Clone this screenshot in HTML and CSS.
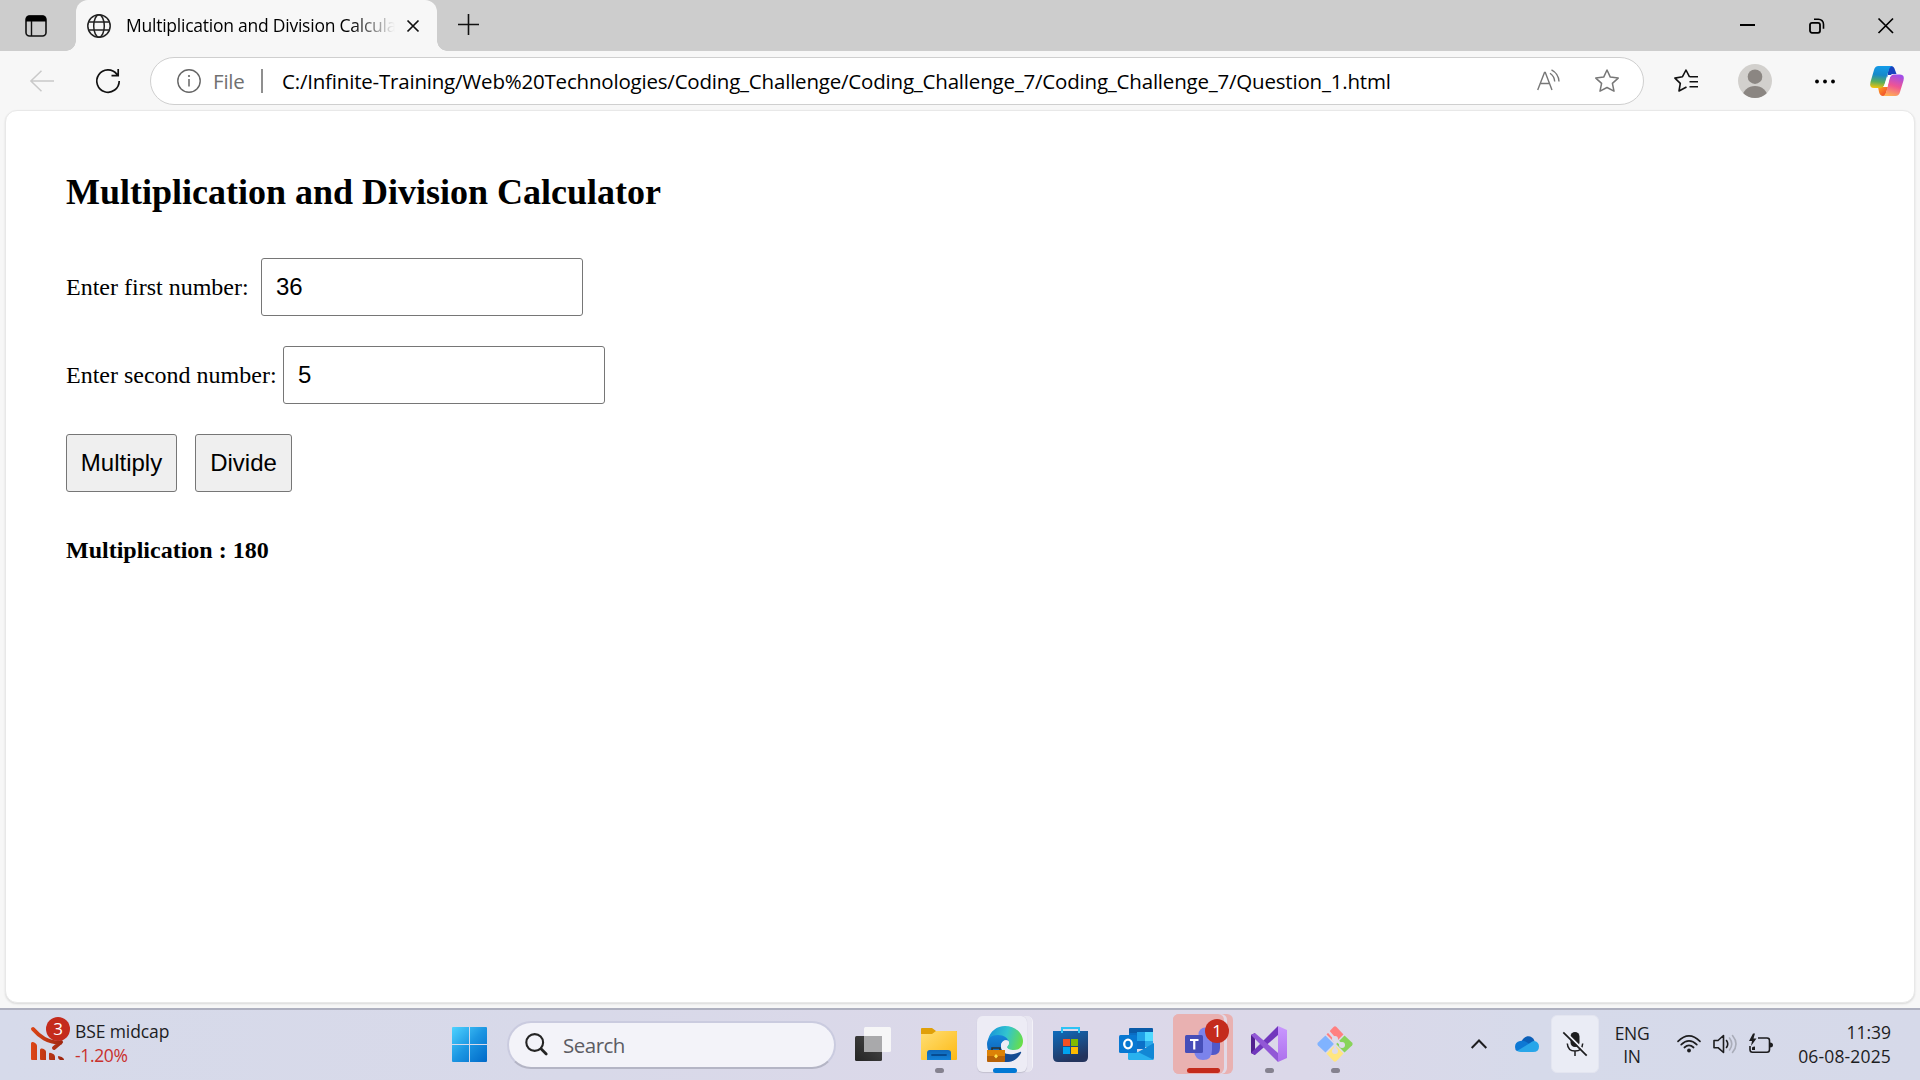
FILE: index.html
```html
<!DOCTYPE html>
<html lang="en">
<head>
<meta charset="utf-8">
<title>Multiplication and Division Calculator</title>
<link rel="stylesheet" href="styles.css">
</head>
<body>
<div class="screen">
  <header class="tabbar">
    <svg class="tab-actions" width="22" height="22" viewBox="0 0 22 22"><rect x="1" y="1" width="20" height="20" rx="3.5" fill="none" stroke="#111" stroke-width="1.6"/><path d="M1 6.5V4a3.5 3.500 0 0 1 3.500-3.500h13A3.500 3.500 0 0 1 21 4v2.500z" fill="#000"/><path d="M6.500 6v15" stroke="#111" stroke-width="1.400"/></svg>
    <div class="tab">
      <svg width="24" height="24" viewBox="0 0 24 24" fill="none" stroke="#222" stroke-width="1.500"><circle cx="12" cy="12" r="11.200"/><ellipse cx="12" cy="12" rx="5.300" ry="11.200"/><path d="M2 8h20M2 16h20"/></svg>
      <span class="tab-title">Multiplication and Division Calcula</span>
      <svg width="12" height="12" viewBox="0 0 12 12" stroke="#111" stroke-width="1.700"><path d="M.5.5l11 11M11.500.5l-11 11"/></svg>
    </div>
    <svg class="new-tab" width="22" height="22" viewBox="0 0 22 22" stroke="#111" stroke-width="1.600"><path d="M0 10.500h21M10.500 0v21"/></svg>
    <div class="window-controls">
      <svg width="16" height="16" viewBox="0 0 16 16"><path d="M0 7h15" stroke="#000" stroke-width="2"/></svg>
      <svg width="16" height="16" viewBox="0 0 16 16" fill="none" stroke="#000" stroke-width="1.800"><rect x="1" y="4.800" width="10" height="10" rx="2"/><path d="M5 1.200h4.500a5 5 0 0 1 5 5v4.500" stroke-width="1.600"/></svg>
      <svg width="16" height="16" viewBox="0 0 16 16" stroke="#000" stroke-width="1.700"><path d="M.5.5l14.500 14.500M15 .5L.5 15"/></svg>
    </div>
  </header>

  <nav class="toolbar">
    <svg class="back" width="24" height="22" viewBox="0 0 24 22" fill="none" stroke="#c9c9c9" stroke-width="1.500"><path d="M24 11H1M11.500.7L.9 11l10.600 10.300"/></svg>
    <svg class="reload" width="24" height="24" viewBox="0 0 24 24" fill="none" stroke="#111" stroke-width="1.700"><path d="M23.200 12A11.200 11.200 0 1 1 20.800 5.100L22 6.500M22.200 0v6.700h-6.700"/></svg>
    <div class="address">
      <svg width="24" height="24" viewBox="0 0 24 24"><circle cx="12" cy="12" r="11.200" fill="none" stroke="#666" stroke-width="1.400"/><path d="M12 10v7.500" stroke="#666" stroke-width="1.500"/><circle cx="12" cy="7" r="1.100" fill="#666"/></svg>
      <span class="scheme">File</span>
      <span class="divider"></span>
      <span class="url">C:/Infinite-Training/Web%20Technologies/Coding_Challenge/Coding_Challenge_7/Coding_Challenge_7/Question_1.html</span>
      <svg class="read" width="24" height="24" viewBox="0 0 24 24" fill="none" stroke="#777" stroke-width="1.400"><path d="M.7 21L7.500 3.500h.8L15 21M3.200 14.500h9.300M13 4.200a11 11 0 0 1 4.700 8.300M14.500.8a14 14 0 0 1 7.500 11.700"/></svg>
      <svg class="star" width="24" height="24" viewBox="0 0 24 24" fill="none" stroke="#777" stroke-width="1.500" stroke-linejoin="round"><path d="M12 1l3.300 7.100 7.900 1-5.800 5.300 1.600 7.800L12 18.500l-7 3.700 1.600-7.800L.8 9.100l7.900-1z"/></svg>
    </div>
    <svg class="favorites" width="26" height="24" viewBox="0 0 26 24" fill="none" stroke="#111" stroke-width="1.600" stroke-linejoin="round"><path d="M15.500 7.800L12 1 8.500 7.700.9 9.100l5.400 5.300L5 22l7.500-4M15.500 7.800H24M15.500 12.800H24M15.500 17.800H24"/></svg>
    <svg class="avatar" width="34" height="34" viewBox="0 0 34 34"><defs><clipPath id="face"><circle cx="17" cy="17" r="17"/></clipPath></defs><g clip-path="url(#face)"><path d="M0 0h34v34H0z" fill="#d2d0cd"/><g fill="#8b8682"><circle cx="17" cy="12.700" r="7.300"/><ellipse cx="17" cy="33" rx="12.500" ry="11"/></g></g></svg>
    <svg class="more" width="20" height="6" viewBox="0 0 20 6"><circle cx="2" cy="3.500" r="1.900"/><circle cx="10" cy="3.500" r="1.900"/><circle cx="18" cy="3.500" r="1.900"/></svg>
    <svg class="copilot" width="34" height="32" viewBox="0 0 34 32">
      <defs>
        <linearGradient id="cpL" x1=".4" y1="0" x2=".3" y2="1"><stop offset="0" stop-color="#139be8"/><stop offset=".4" stop-color="#1789c9"/><stop offset=".72" stop-color="#5cae5b"/><stop offset="1" stop-color="#f4c20b"/></linearGradient>
        <linearGradient id="cpR" x1=".6" y1="0" x2=".3" y2="1"><stop offset="0" stop-color="#a14de8"/><stop offset=".5" stop-color="#ef5494"/><stop offset="1" stop-color="#ffb053"/></linearGradient>
        <linearGradient id="cpB" x1="0" y1="0" x2="1" y2="1"><stop offset="0" stop-color="#ffa51f"/><stop offset="1" stop-color="#ee3b34"/></linearGradient>
      </defs>
      <path d="M19 1h2q3 0 4 4l1.500 4H22l-5 4z" fill="#1643bf"/>
      <path d="M8 22h10l-3 9h-2q-3 0-4-4z" fill="url(#cpB)"/>
      <path d="M8.500 1H22q-2.500 1-3.500 5L14.600 19q-1.200 4-4.600 4H4q-5 0-3.500-6L4 5q1-4 4.500-4z" fill="url(#cpL)"/>
      <path d="M25.500 31H13q2.500-1 3.500-5l3-12q1-4.500 4.500-4.500h6q5 0 3.500 6L30 27q-1 4-4.500 4z" fill="url(#cpR)"/>
      <path d="M18 10h3.500q-1.500 1-2.200 4l-2 8h-4q1-1 1.700-3.500z" fill="#fff"/>
    </svg>
  </nav>

  <main class="page">
    <h2>Multiplication and Division Calculator</h2>
    <div class="field"><label class="first" for="n1">Enter first number:</label><input id="n1" type="text" value="36"></div>
    <div class="field"><label class="second" for="n2">Enter second number:</label><input id="n2" type="text" value="5"></div>
    <div class="actions"><button class="multiply">Multiply</button><button class="divide">Divide</button></div>
    <p class="result">Multiplication : 180</p>
  </main>

  <footer class="taskbar">
    <div class="widget">
      <div class="widget-icon">
        <svg width="34" height="36" viewBox="0 0 34 36"><defs><linearGradient id="down" x1="0" x2="34" gradientUnits="userSpaceOnUse"><stop offset="0" stop-color="#df4717"/><stop offset="1" stop-color="#9b2610"/></linearGradient></defs><g fill="url(#down)"><path d="M1 19.500q0-2 2-1.500 4 1.500 4 4V36H2q-1 0-1-1z"/><path d="M10 26q0-2 2-1.500 4 1 4 3.500v8h-5q-1 0-1-1z"/><path d="M19 30q0-2 2-1 4 1 4 4v3h-5q-1 0-1-1z"/><path d="M28 33q0-1.500 2-.5 4 1 4 3.500h-4q-2-1-2-3z"/></g><path d="M3 5c7 8 14 13 27 14M31 18l-7 6" fill="none" stroke="url(#down)" stroke-width="4" stroke-linecap="round"/></svg>
        <span class="badge">3</span>
      </div>
      <div class="widget-text"><span class="ticker">BSE midcap</span><span class="change">-1.20%</span></div>
    </div>
    <svg class="start" width="36" height="36" viewBox="0 0 36 36"><defs><linearGradient id="win" x1="0" y1="0" x2="1" y2="1"><stop offset="0" stop-color="#4ed3ff"/><stop offset=".5" stop-color="#1c96e2"/><stop offset="1" stop-color="#0069c8"/></linearGradient></defs><path d="M1 0h16v17H0V1q0-1 1-1zM18 0h16q1 0 1 1v16H18zM0 18h17v17H1q-1 0-1-1zM18 18h17v16q0 1-1 1H18z" fill="url(#win)"/></svg>
    <div class="search">
      <svg width="23" height="23" viewBox="0 0 23 23" fill="none" stroke="#242424" stroke-width="2.100" stroke-linecap="round"><circle cx="9.700" cy="9.500" r="8.400"/><path d="M16 15.800l5.200 5.200" stroke-width="2.800"/></svg>
      <span>Search</span>
    </div>
    <div class="apps">
      <div class="slot">
        <svg width="36" height="36" viewBox="0 0 36 36"><defs><linearGradient id="dk" x1="1" y1="0" x2="0" y2="1"><stop offset="0" stop-color="#4a4a4a"/><stop offset="1" stop-color="#242424"/></linearGradient></defs><rect y="10" width="27" height="25" rx="1.500" fill="url(#dk)"/><rect x="9" y="1" width="27" height="25" rx="1.500" fill="#f8f8f8" opacity=".93"/><path d="M9 10h18v16H10q-1 0-1-1z" fill="#a9a9ab"/></svg>
      </div>
      <div class="slot running">
        <svg width="36" height="36" viewBox="0 0 36 36"><defs><linearGradient id="fold" x1="0" y1="0" x2="1" y2="1"><stop offset="0" stop-color="#ffdf75"/><stop offset="1" stop-color="#fdb913"/></linearGradient><linearGradient id="pocket" x1="0" y1="0" x2="0" y2="1"><stop offset="0" stop-color="#0f66b8"/><stop offset="1" stop-color="#1382d8"/></linearGradient></defs><path d="M0 3q0-1 1-1h10l4 3h20q1 0 1 1v6H0z" fill="#e0a008"/><path d="M0 8h11l4-3h20q1 0 1 1v27q0 1-1 1H1q-1 0-1-1z" fill="url(#fold)"/><path d="M6 34V27q0-3 3-3h18q3 0 3 3v7z" fill="url(#pocket)"/><path d="M11 29h14" stroke="#064b91" stroke-width="1.800" stroke-linecap="round"/></svg>
      </div>
      <div class="slot edge">
        <span class="stack"></span><span class="tile"></span>
        <svg width="36" height="36" viewBox="0 0 36 36"><defs><linearGradient id="eg" x1="0" y1=".4" x2="1" y2=".6"><stop offset="0" stop-color="#1895d8"/><stop offset=".5" stop-color="#32c4cf"/><stop offset="1" stop-color="#69df45"/></linearGradient><linearGradient id="eb" x1="0" y1="0" x2="0" y2="1"><stop offset="0" stop-color="#1686db"/><stop offset="1" stop-color="#0b54a8"/></linearGradient></defs><path d="M1 14C3 5 10 0 18 0c10 0 18 7 18 15 0 6-4 9-9 9-4 0-7-1-7-3 0-1 2-2 2-4 0-3-3-6-8-6C8 11 3 14 1 14z" fill="url(#eg)"/><path d="M0 18C0 12 5 9 11 9c6 0 10 3 11 7-3-3-8-1-8 4 0 8 7 14 16 12-3 3-7 4-12 4C8 36 0 28 0 18z" fill="url(#eb)"/><path d="M14 21c0 6 7 10 19 5 1-.5 1.500 0 1 1-3 6-9 9-16 9-4-3-6-9-4-15z" fill="#144b92"/><path d="M22 16c-1-3-8-2-8 4 0 3 2 5 4 6 6 2 12 1 15-1-4 0-13 0-13-4 0-1 2-2 2-5z" fill="#edecf5"/><path d="M0 24h18v11q0 1-1 1H1q-1 0-1-1z" fill="#b86207"/><path d="M0 24h18v6H0z" fill="#dc8207"/><path d="M5 24v-2h8v2" fill="none" stroke="#2b302f" stroke-width="1.500"/><path d="M9 28l2 2.200-2 2.200-2-2.200z" fill="#ffe14b"/></svg>
      </div>
      <div class="slot">
        <svg width="36" height="36" viewBox="0 0 36 36"><defs><linearGradient id="store" x1="0" y1="0" x2=".4" y2="1"><stop offset="0" stop-color="#0e6cbd"/><stop offset="1" stop-color="#24345d"/></linearGradient></defs><path d="M0 5h35v26q0 5-5 5H5q-5 0-5-5z" fill="url(#store)"/><path d="M9 7V2h17v5" fill="none" stroke="#2dc3f5" stroke-width="2"/><path d="M10 13h7v7h-7z" fill="#f25022"/><path d="M18 13h7v7h-7z" fill="#7fba00"/><path d="M10 21h7v7h-7z" fill="#00a4ef"/><path d="M18 21h7v7h-7z" fill="#ffb900"/></svg>
      </div>
      <div class="slot">
        <svg width="36" height="36" viewBox="0 0 36 36"><path d="M10 3q0-1 1-1h22q1 0 1 1v16H10z" fill="#0a5ba8"/><path d="M10 7h8v8h-8z" fill="#0a6dc4"/><path d="M18 6h8v9h-8z" fill="#20a1e8"/><path d="M26 6h8v9h-8z" fill="#50d9ff"/><path d="M18 15h8v8h-8z" fill="#0b70c8"/><path d="M26 15h8v6h-8z" fill="#2ba9ea"/><path d="M35 17v15q0 2-2 2H11q-2 0-2-2V26l10 0z" fill="#1287d5"/><path d="M9 24l10 2 16 8H11q-2 0-2-2z" fill="#29b1ef"/><rect y="9" width="18" height="18" rx="1.500" fill="#0878d2"/><ellipse cx="9" cy="18" rx="3.800" ry="4.300" fill="none" stroke="#fff" stroke-width="2.300"/></svg>
      </div>
      <div class="slot teams">
        <span class="stack"></span><span class="tile"></span>
        <svg width="36" height="36" viewBox="0 0 36 36"><circle cx="20" cy="8" r="6.500" fill="#7b83eb"/><path d="M24 14h11v8q0 7-7 7h-4z" fill="#5059c9"/><path d="M9 14h18v10q0 10-9 10-8 0-9-9z" fill="#7b83eb"/><rect y="9" width="18" height="18" rx="1.500" fill="#464eb8"/><path d="M5 14h8.500M9.250 14v9.500" stroke="#fff" stroke-width="2.200"/></svg>
        <span class="badge">1</span>
      </div>
      <div class="slot running">
        <svg width="36" height="36" viewBox="0 0 36 36"><defs><linearGradient id="vs" x1="0" y1="0" x2="0" y2="1"><stop offset="0" stop-color="#c997ff"/><stop offset="1" stop-color="#ad70ec"/></linearGradient></defs><path d="M0 9l4-2 0 22-4-2z" fill="#52218f"/><path d="M4 29l-4-2L27 0v9z" fill="#7137bd"/><path d="M0 9l4-2 23 20v9z" fill="#9258d6"/><path d="M27 0l9 4v28l-9 4z" fill="url(#vs)"/></svg>
      </div>
      <div class="slot running">
        <svg width="36" height="36" viewBox="0 0 36 36"><path d="M9 9l7.500-8q1.500-1.500 3 0L27 9l-9 9z" fill="#ff8080"/><path d="M27 9l8 7.500q1.500 1.500 0 3L27 27l-9-9z" fill="#88d35a"/><path d="M9 9l-8 7.500q-1.500 1.500 0 3L9 27l9-9z" fill="#80b3ff"/><path d="M9 27l7.500 8q1.500 1.500 3 0L27 27l-9-9z" fill="#ffe680"/><g fill="none" stroke="#dedbea" stroke-width="2.500"><path d="M8 8l20 20M28 8L8 28" stroke-width="1.500"/><path d="M11 5l7 8v13M18 13l7 6"/></g><g fill="#dedbea"><circle cx="18" cy="13" r="3"/><circle cx="25" cy="19" r="3"/><circle cx="18" cy="25" r="3"/></g></svg>
      </div>
    </div>
    <div class="tray">
      <svg class="chevron" width="16" height="10" viewBox="0 0 16 10" fill="none" stroke="#1d1d1f" stroke-width="2"><path d="M.7 9L8 1.500 15.300 9"/></svg>
      <svg class="onedrive" width="24" height="16" viewBox="0 0 24 16"><path d="M6 7C8-1 17-2 19.500 5L13 10z" fill="#0b5fb8"/><path d="M0 11q0-5 5-6 4-1 8 2l8 6-19 2q-2-1-2-4z" fill="#0d78d4"/><path d="M2 15L15 7q2-2 4.500-2 4.500 1 4.500 5.500 0 5.500-6 5.500H6q-2 0-4-1z" fill="#28a6e9"/></svg>
      <div class="mic"><svg width="24" height="24" viewBox="0 0 24 24"><rect x="7.500" y="0" width="9" height="15" rx="4.500" fill="#1d1d1f"/><path d="M4.300 11.500q.5 7.500 7.700 7.500t7.700-7.500M12 19v5" fill="none" stroke="#1d1d1f" stroke-width="1.500"/><path d="M1.500-.8L24.500 22.200" stroke="#eeeff7" stroke-width="2"/><path d="M.3.3l23.400 23.400" stroke="#1d1d1f" stroke-width="1.700"/></svg></div>
      <div class="lang"><span>ENG</span><span>IN</span></div>
      <svg class="wifi" width="24" height="18" viewBox="0 0 24 18" fill="none" stroke="#1d1d1f" stroke-width="1.700" stroke-linecap="round"><path d="M1 6.400q11-11 22 0M4.200 9.600q7.800-7.500 15.600 0M7.400 12.500q4.600-4.200 9.200 0"/><circle cx="12" cy="15.500" r="1.900" fill="#1d1d1f" stroke="none"/></svg>
      <svg class="volume" width="24" height="20" viewBox="0 0 24 20" fill="none" stroke="#1d1d1f" stroke-width="1.600" stroke-linejoin="round" stroke-linecap="round"><path d="M1 6.500h4L10.500 1.500v17L5 13.700H1z"/><path d="M13.500 6.500q2.500 3.500 0 7"/><path d="M16.500 4q4.500 6 0 12M19.500 1.500q7 8.500 0 17" stroke="#a9acb8"/></svg>
      <svg class="battery" width="24" height="20" viewBox="0 0 24 20"><path d="M9 4h9q2.500 0 2.500 2.500v9q0 2.700-2.500 2.700H3.500Q1 18.200 1 15.500V12" fill="none" stroke="#1d1d1f" stroke-width="1.600"/><path d="M21 8.500q3 0 3 2.500t-3 2.500z" fill="#1d1d1f"/><path d="M4-.5L0 7h3l-1 5 5.500-7.500H4.500L6-.5z" fill="#1d1d1f"/><path d="M3 13.500q1-1 3-1v3.500H3z" fill="#1d1d1f"/></svg>
      <div class="clock"><span class="time">11:39</span><span class="date">06-08-2025</span></div>
    </div>
  </footer>
</div>
</body>
</html>
```

FILE: styles.css
```css
* { box-sizing: border-box; }
body { margin: 0; overflow: hidden; }
svg { display: block; flex: none; overflow: visible; }
.screen {
  display: flex; flex-direction: column; width: 1920px; height: 1080px;
  background: #f7f7f7; color: #000;
  font-family: "Open Sans", "Noto Sans", sans-serif; white-space: nowrap;
}

/* Tab strip */
.tabbar { display: flex; height: 51px; background: #cdcdcd; }
.tab-actions { margin: 15px 0 0 25px; }
.tab {
  position: relative; display: flex; align-items: center; width: 361px; height: 51px;
  margin-left: 29px; padding-left: 11px; background: #f7f7f7; border-radius: 12px 12px 0 0;
}
.tab::before, .tab::after {
  content: ""; position: absolute; bottom: 0; width: 10px; height: 10px;
}
.tab::before { left: -10px; background: radial-gradient(circle at 0 0, #cdcdcd 9.500px, #f7f7f7 10px); }
.tab::after { right: -10px; background: radial-gradient(circle at 100% 0, #cdcdcd 9.500px, #f7f7f7 10px); }
.tab-title {
  width: 269px; margin: -1px 12px 0 15px;
  font-size: 17.500px; letter-spacing: -0.240px; line-height: 26px;
  -webkit-mask-image: linear-gradient(90deg, #000 225px, transparent 269px);
  mask-image: linear-gradient(90deg, #000 225px, transparent 269px);
}
.new-tab { margin: 14px 0 0 21px; }
.window-controls { display: flex; gap: 53px; margin: 18px 26px 0 auto; }

/* Toolbar */
.toolbar { display: flex; align-items: center; height: 59px; padding-left: 30px; }
.reload { margin-left: 42px; }
.address {
  display: flex; align-items: center; width: 1494px; height: 48px; margin-left: 30px;
  padding-left: 26px; background: #fff; border: 1px solid #cfcfcf; border-radius: 24px;
}
.scheme { width: 34px; margin-left: 12px; color: #707070; font-size: 20.500px; letter-spacing: -0.200px; }
.divider { width: 2px; height: 24px; margin: 0 19px 0 14px; background: #8f8f8f; }
.url { width: 1255px; font-size: 20.500px; letter-spacing: -0.200px; }
.star { margin-left: 34px; }
.favorites { margin-left: 30px; }
.avatar { margin-left: 38px; }
.more { margin-left: 43px; }
.copilot { margin-left: 35px; }

/* Document */
.page {
  width: 1910px; height: 893px; margin: 0 5px; padding: 0 60px; background: #fff;
  border: 1px solid #e8e8e8; border-radius: 12px; box-shadow: 0 1px 2px #d9d9d9;
  font: 24px "Liberation Serif", serif;
}
.page h2 { margin: 60px 0 0; font-size: 36px; line-height: 42px; }
.field { display: flex; align-items: center; height: 58px; margin-top: 30px; }
.page h2 + .field { margin-top: 45px; }
.field label { width: 217px; }
.field .first { width: 195px; }
.field input {
  width: 322px; height: 58px; padding: 0 14px; border: 1px solid #767676; border-radius: 3px;
  background: #fff; color: #000; font: 24px "Liberation Sans", sans-serif;
}
.actions { display: flex; gap: 18px; margin-top: 30px; }
.actions button {
  height: 58px; padding: 0; border: 1px solid #767676; border-radius: 3px;
  background: #efefef; color: #000; font: 24px "Liberation Sans", sans-serif;
}
.multiply { width: 111px; }
.divide { width: 97px; }
.result { margin: 44px 0 0; font-weight: bold; line-height: 28px; }

/* Taskbar */
.taskbar {
  display: flex; align-items: center; height: 72px; margin-top: 5px; border-top: 2px solid #aeb0bf;
  background: linear-gradient(90deg, #d6daea 0, #d8d9e9 30%, #dcd8e9 56%, #dbd8e9 68%, #d6daea 80%, #d6d9e9 100%);
  color: #1d1d1f; font-size: 17.500px;
}
.widget { display: flex; width: 452px; height: 70px; padding-left: 30px; }
.widget-icon { position: relative; width: 45px; padding-top: 14px; }
.badge {
  position: absolute; width: 24px; height: 24px; border-radius: 50%; background: #c42b1c;
  color: #fff; font-size: 17px; line-height: 23px; text-align: center;
}
.widget .badge { left: 16px; top: 7px; }
.widget-text { display: flex; flex-direction: column; padding-top: 9px; line-height: 24px; }
.ticker { letter-spacing: -0.100px; }
.change { color: #c9302c; letter-spacing: -0.350px; }
.start { margin-top: -1px; }
.search {
  display: flex; align-items: center; width: 329px; height: 48px; margin: -1px 4px 0 19px; padding-left: 16px;
  background: #f3f3f9; border: 2px solid #cacbdf; border-bottom-color: #b4b5c5; border-radius: 24px;
  color: #5c5c63; font-size: 20.500px;
}
.search span { margin-left: 15px; letter-spacing: -0.500px; }
.apps { display: flex; }
.slot { position: relative; display: flex; align-items: center; justify-content: center; width: 66px; height: 70px; }
.slot svg { position: relative; margin-top: -3px; }
.running::after, .edge::after, .teams::after {
  content: ""; position: absolute; bottom: 7px; left: 29px; width: 9px; height: 5px;
  border-radius: 3px; background: #85828f;
}
.edge::after { left: 21px; width: 24px; background: #0078d4; }
.teams::after { left: 17px; width: 33px; background: #c42b1c; }
.tile, .stack { position: absolute; top: 6px; left: 5px; width: 50px; height: 56px; border-radius: 6px; }
.edge .tile { background: #edecf5; box-shadow: 0 1px 1px #c2c0cf; }
.edge .stack { width: 56px; background: #e8e6f1; border-right: 1px solid #f3f2f8; box-shadow: inset -5px 0 #e8e6f1, inset -7px 0 #d0cedd; }
.teams .tile { top: 4px; left: 3px; width: 51px; height: 60px; background: #e9b1b1; box-shadow: 3px 0 #e2d9e6; }
.teams .stack { top: 4px; left: 3px; width: 60px; height: 60px; background: #e9b1b1; }
.teams .badge { left: 35px; top: 9px; }
.tray { display: flex; align-items: center; height: 70px; margin-left: 103px; }
.chevron { margin-top: -2px; }
.onedrive { margin: -2px 0 0 28px; }
.mic {
  display: flex; align-items: center; justify-content: center; width: 48px; height: 58px; margin: -2px 0 0 12px;
  background: #eaecf5; border: 1px solid #e3e5f0; border-radius: 6px;
}
.lang { display: flex; flex-direction: column; width: 66px; line-height: 23px; text-align: center; letter-spacing: -0.300px; }
.wifi { margin: -2px 0 0 12px; }
.volume, .battery { margin: -2px 0 0 12px; }
.clock { display: flex; flex-direction: column; width: 118px; margin-top: -2px; line-height: 24px; text-align: right; }
.date { letter-spacing: 0.150px; }
```
